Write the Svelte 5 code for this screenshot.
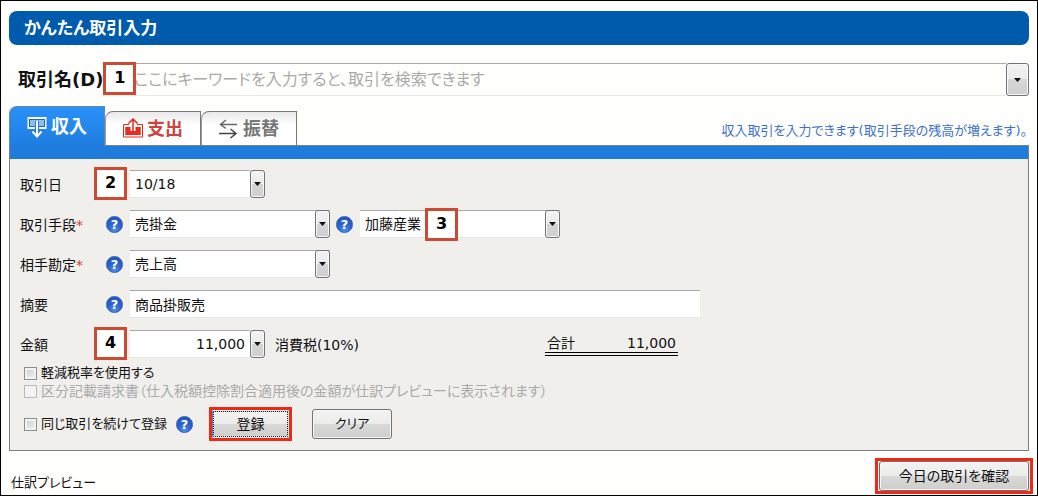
<script>
    let keyword = $state('')
    let activeTab = $state('income')
    let date = $state('10/18')
    let method = $state('売掛金')
    let partner = $state('加藤産業')
    let account = $state('売上高')
    let memo = $state('商品掛販売')
    let amount = $state('11,000')
    let reduced = $state(false)
    let invoice = $state(false)
    let keepGoing = $state(false)

    const tabs = [
        { id: 'income', label: '収入' },
        { id: 'expense', label: '支出' },
        { id: 'transfer', label: '振替' }
    ]

    function clearForm() {
        memo = ''
        amount = ''
        keyword = ''
    }
</script>

{#snippet help(topic)}
    <button type="button" class="help" aria-label={topic}>?</button>
{/snippet}

{#snippet arrow()}
    <svg width="7" height="4" viewBox="0 0 7 4"><path d="M0 0h7L3.500 4z" fill="#111" /></svg>
{/snippet}

<div class="page">
    <h1>かんたん取引入力</h1>

    <div class="search">
        <label for="keyword">取引名(D)</label>
        <div class="combo wide">
            <input id="keyword" type="text" bind:value={keyword} placeholder="ここにキーワードを入力すると、取引を検索できます" />
            <button type="button" class="drop" aria-label="取引名">{@render arrow()}</button>
            <span class="badge">1</span>
        </div>
    </div>

    <div class="tab-bar">
        <div class="tabs" role="tablist">
            {#each tabs as tab}
                <button
                    type="button"
                    role="tab"
                    class={['tab', tab.id]}
                    class:active={tab.id === activeTab}
                    aria-selected={tab.id === activeTab}
                    onclick={() => activeTab = tab.id}
                >
                    <svg width="20" height="22" viewBox="0 0 20 22" fill="none">
                        {#if tab.id === 'income'}
                            <rect x="0.5" y="1" width="19" height="12" fill="#fff" />
                            <rect x="2.500" y="3.500" width="15" height="7" fill="#8fbdf3" stroke="#1767c4" />
                            <path d="M10 5v14M5 14.500l5 5.500 5-5.500" stroke="#1f7fe0" stroke-width="4" />
                            <path d="M10 5v15M5.500 15.500l4.500 5 4.500-5" stroke="#fff" stroke-width="2" />
                        {:else if tab.id === 'expense'}
                            <path d="M6 6.500H0.5v12.500h19V6.500H14" stroke="#e5281c" />
                            <path d="M2.500 9h4.500v4h6v-4h4.500v8h-15z" fill="#ee2a1c" />
                            <path d="M2.500 9h5v8h-5zM12.500 9h5v8h-5z" fill="#ee2a1c" />
                            <path d="M10 14V2M5.500 5.500l4.500-4.500 4.500 4.500" stroke="#e5281c" stroke-width="1.500" />
                        {:else}
                            <path d="M18 6.500H1.500M7 2L1.500 6.500l5.500 4" stroke="#666" stroke-width="1.500" />
                            <path d="M0 15.500h16.500M11.500 11l5.500 4.500-5.500 4.500" stroke="#444" stroke-width="1.500" />
                        {/if}
                    </svg>
                    {tab.label}
                </button>
            {/each}
        </div>
        <p>収入取引を入力できます(取引手段の残高が増えます)。</p>
    </div>

    <form class="panel" onsubmit={(e) => e.preventDefault()}>
        <div class="fields">
            <div class="row">
                <label for="date">取引日</label>
                <span></span>
                <div class="combo short">
                    <input id="date" type="text" bind:value={date} />
                    <button type="button" class="drop" aria-label="カレンダー">{@render arrow()}</button>
                    <span class="badge">2</span>
                </div>
            </div>

            <div class="row">
                <label for="method">取引手段<em>*</em></label>
                {@render help('取引手段')}
                <div class="combo">
                    <select id="method" bind:value={method}>
                        <option>売掛金</option>
                        <option>現金</option>
                    </select>
                    <span class="drop">{@render arrow()}</span>
                </div>
                <div class="partner">
                    {@render help('取引先')}
                    <div class="combo">
                        <select bind:value={partner} aria-label="取引先">
                            <option>加藤産業</option>
                        </select>
                        <span class="drop">{@render arrow()}</span>
                        <span class="badge inside">3</span>
                    </div>
                </div>
            </div>

            <div class="row">
                <label for="account">相手勘定<em>*</em></label>
                {@render help('相手勘定')}
                <div class="combo">
                    <select id="account" bind:value={account}>
                        <option>売上高</option>
                    </select>
                    <span class="drop">{@render arrow()}</span>
                </div>
            </div>

            <div class="row">
                <label for="memo">摘要</label>
                {@render help('摘要')}
                <input id="memo" class="memo" type="text" bind:value={memo} />
            </div>

            <div class="row">
                <label for="amount">金額</label>
                <span></span>
                <div class="combo short">
                    <input id="amount" class="number" type="text" bind:value={amount} />
                    <button type="button" class="drop" aria-label="電卓">{@render arrow()}</button>
                    <span class="badge">4</span>
                </div>
                <div class="sums">
                    <span class="tax">消費税(10%)</span>
                    <span class="total"><span>合計</span><output for="amount">{amount}</output></span>
                </div>
            </div>
        </div>

        <div class="checks">
            <label><input type="checkbox" bind:checked={reduced} />軽減税率を使用する</label>
            <label class="disabled"><input type="checkbox" bind:checked={invoice} disabled />区分記載請求書（仕入税額控除割合適用後の金額が仕訳プレビューに表示されます）</label>
        </div>

        <div class="actions">
            <label><input type="checkbox" bind:checked={keepGoing} />同じ取引を続けて登録</label>
            {@render help('続けて登録')}
            <span class="highlight"><button type="submit" class="button primary">登録</button></span>
            <button type="button" class="button clear" onclick={clearForm}>クリア</button>
        </div>
    </form>

    <div class="footer">
        <h2>仕訳プレビュー</h2>
        <span class="highlight"><button type="button" class="button today">今日の取引を確認</button></span>
    </div>
</div>

<style>
    :global(body) {
        margin: 0;
        background: #fff;
    }

    .page, .page * {
        box-sizing: border-box;
    }

    .page {
        min-height: 100vh;
        padding: 10px 8px 1px;
        border: 1px solid #000;
        background: #fefefd;
        color: #111;
        font: 14px/18px "DejaVu Sans", "Noto Sans CJK JP", sans-serif;
        font-feature-settings: "palt";
    }

    button, input, select {
        margin: 0;
        font: inherit;
        font-feature-settings: inherit;
        color: inherit;
    }

    h1 {
        margin: 0;
        padding: 0 15px;
        border-radius: 8px;
        background: #005bac;
        color: #fff;
        font-size: 17px;
        line-height: 34px;
    }

    .search {
        display: flex;
        align-items: center;
        margin-top: 18px;
        padding-left: 9px;
    }

    .search label {
        font-size: 18px;
        font-weight: bold;
        white-space: nowrap;
    }

    .combo {
        position: relative;
        display: grid;
        grid-template-columns: 1fr 15px;
        width: 200px;
        height: 28px;
    }

    .combo.short {
        width: 135px;
    }

    .combo.wide {
        flex: 1;
        grid-template-columns: 1fr 23px;
        height: 33px;
    }

    .combo input, .combo select, .memo {
        min-width: 0;
        width: 100%;
        height: 100%;
        padding: 0 5px;
        border: 0;
        border-top: 1px solid #aaa;
        border-bottom: 1px solid #e6e8e8;
        border-radius: 0;
        background: #fff;
        appearance: none;
        outline: none;
    }

    .combo.wide input {
        padding-left: 31px;
        font-size: 16px;
        background: #fefefc;
    }

    .combo input.number {
        text-align: right;
    }

    .combo select {
        grid-area: 1 / 1 / 2 / 3;
    }

    .combo .drop {
        grid-area: 1 / 2;
        display: flex;
        align-items: center;
        justify-content: center;
        padding: 0;
        border: 1px solid #70737a;
        border-radius: 3px;
        background: linear-gradient(#f3f3f3 0, #ebebeb 50%, #d6d6d6 50%, #cfcfcf 100%);
        box-shadow: inset 0 0 0 1px #f8f8f8;
        pointer-events: none;
    }

    .combo button.drop {
        pointer-events: auto;
    }

    ::placeholder {
        color: #aaa;
        opacity: 1;
    }

    .badge {
        position: absolute;
        top: -3px;
        left: -36px;
        width: 33px;
        height: 33px;
        border: 3px solid #cb4a32;
        background: #fff;
        color: #000;
        font-size: 16px;
        font-weight: bold;
        line-height: 26px;
        text-align: center;
    }

    .wide .badge {
        top: -1px;
        left: 0;
    }

    .badge.inside {
        top: -2px;
        left: 65px;
    }

    .tab-bar {
        display: flex;
        justify-content: space-between;
        align-items: flex-end;
        margin-top: 10px;
    }

    .tab-bar p {
        margin: 0;
        padding: 0 2px 5px 0;
        color: #3e72c8;
        font-size: 13px;
    }

    .tabs {
        display: flex;
        align-items: flex-end;
    }

    .tab {
        display: flex;
        align-items: center;
        gap: 4px;
        width: 96px;
        height: 34px;
        padding: 0 0 0 17px;
        border: 1px solid #777;
        border-bottom: 0;
        border-left-color: #999;
        border-radius: 8px 0 0 0;
        background: linear-gradient(#e9e9ea, #fff 40%);
        font-size: 18px;
        font-weight: bold;
        line-height: 24px;
        white-space: nowrap;
    }

    .tab svg {
        flex: none;
    }

    .tab.expense {
        color: #cd443f;
    }

    .tab.transfer {
        color: #777;
    }

    .tab.active {
        height: 40px;
        margin-bottom: -1px;
        border-color: #5f88b5;
        background: linear-gradient(#2990f8, #1f7edf);
        color: #fff;
        z-index: 1;
    }

    .panel {
        border: 1px solid #7d7f82;
        background: #f0efec;
    }

    .panel::before {
        content: "";
        display: block;
        height: 13px;
        background: #1f7cdc;
    }

    .fields {
        display: grid;
        gap: 12px;
        padding: 11px 10px 0;
    }

    .row {
        display: grid;
        grid-template-columns: 86px 24px auto 1fr;
        align-items: center;
        height: 28px;
    }

    .row > label {
        padding-top: 2px;
    }

    em {
        color: #e03c31;
        font-style: normal;
    }

    .help {
        width: 17px;
        height: 17px;
        padding: 0;
        border: 1px solid #2c5cb8;
        border-radius: 50%;
        background: radial-gradient(circle at 50% 90%, #4f8df0, #2a5fca 50%, #2453b4);
        color: #fff;
        font-size: 13px;
        font-weight: bold;
        line-height: 15px;
        text-align: center;
    }

    .partner {
        display: grid;
        grid-template-columns: 24px auto;
        align-items: center;
        justify-content: start;
        padding-left: 6px;
    }

    .memo {
        grid-column: 3 / 5;
        max-width: 570px;
    }

    .sums {
        display: flex;
        align-items: center;
        padding-left: 10px;
    }

    .tax {
        width: 270px;
        padding-top: 2px;
    }

    .total {
        display: flex;
        justify-content: space-between;
        width: 133px;
        padding: 2px 2px 0;
        border-bottom: 4px double #000;
    }

    .checks {
        display: grid;
        justify-items: start;
        padding: 6px 14px 0;
    }

    .checks label, .actions label {
        display: flex;
        align-items: center;
        gap: 4px;
        font-size: 13px;
    }

    .disabled {
        color: #aaa;
    }

    input[type="checkbox"] {
        flex: none;
        width: 13px;
        height: 13px;
        border: 1px solid #8c8e90;
        background: linear-gradient(135deg, #c8cbce, #f4f4f4);
        box-shadow: inset 0 0 0 2px #f2f2f2;
        appearance: none;
    }

    input[type="checkbox"]:checked {
        background: #2a5fca;
    }

    input[type="checkbox"]:disabled {
        border-color: #bbb;
        background: #f3f3f2;
    }

    .checks .disabled {
        font-size: 14px;
    }

    .actions {
        display: flex;
        align-items: center;
        padding: 7px 14px 9px;
    }

    .actions .help {
        margin: 0 16px 0 12px;
    }

    .actions label {
        width: 140px;
        white-space: nowrap;
    }

    .highlight {
        display: flex;
        padding: 1px;
        border: 3px solid #f02817;
        background: #f0efec;
    }

    .button {
        height: 30px;
        padding: 0;
        border: 1px solid #707274;
        border-radius: 3px;
        background: linear-gradient(#f3f3f2 0, #ebebea 50%, #d9d9d8 50%, #cececd 100%);
        box-shadow: inset 0 0 0 1px #f6f6f6;
    }

    .primary {
        width: 75px;
        height: 26px;
        border: 1px dotted #223;
        border-radius: 1px;
        box-shadow: -1px 0 0 #3d8ad0;
    }

    .clear {
        width: 80px;
        margin-left: 20px;
        font-size: 13px;
    }

    .footer {
        display: flex;
        align-items: flex-end;
        justify-content: space-between;
        margin: 7px -4px 0 2px;
    }

    .footer .highlight {
        padding: 0 1px;
    }

    h2 {
        margin: 0;
        padding-bottom: 2px;
        font-size: 13px;
        font-weight: normal;
    }

    .today {
        width: 150px;
    }
</style>
